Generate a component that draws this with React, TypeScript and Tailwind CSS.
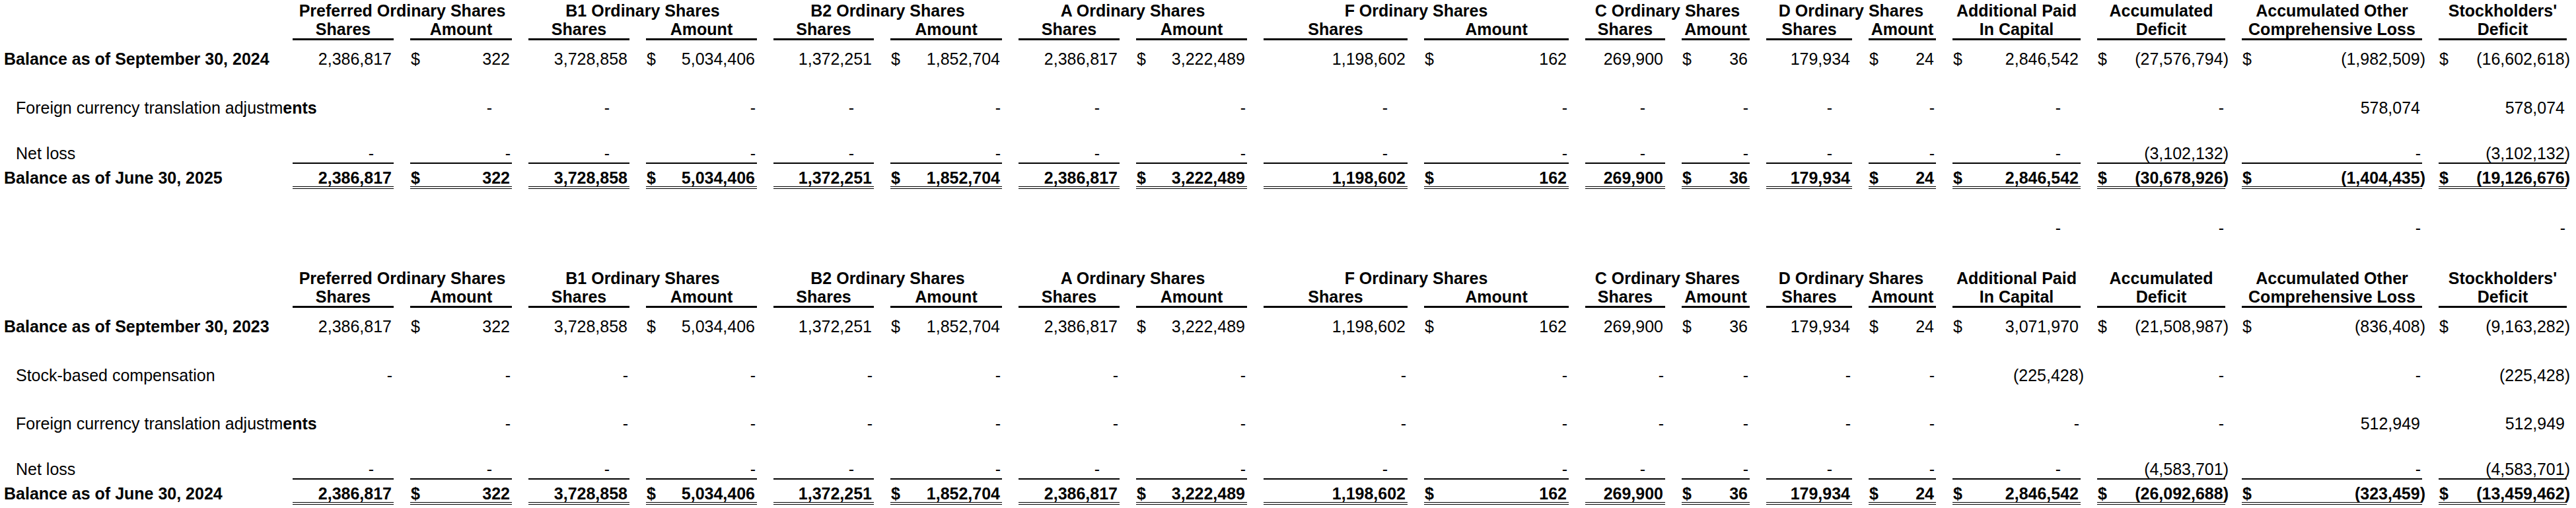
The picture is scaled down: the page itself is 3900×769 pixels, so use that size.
import clsx from 'clsx';

// same column template for every row of both tables
const grid =
  'grid grid-cols-[418px_153px_154px_153px_168px_152px_169px_153px_168px_218px_219px_121px_103px_130px_102px_194px_194px_273px_194px] gap-x-[25px]';

const shareVals = [
  '2,386,817', '$322', '3,728,858', '$5,034,406', '1,372,251', '$1,852,704', '2,386,817', '$3,222,489',
  '1,198,602', '$162', '269,900', '$36', '179,934', '$24',
];

const groups = ['Preferred Ordinary Shares', 'B1 Ordinary Shares', 'B2 Ordinary Shares', 'A Ordinary Shares', 'F Ordinary Shares', 'C Ordinary Shares', 'D Ordinary Shares'];
const singles: [string, string][] = [
  ['Additional Paid', 'In Capital'],
  ['Accumulated', 'Deficit'],
  ['Accumulated Other', 'Comprehensive Loss'],
  ["Stockholders'", 'Deficit'],
];

type Row = { label: React.ReactNode; cells: string[]; kind?: 'under' | 'total'; gap: string };

const Value = ({ v, line }: { v: string; line?: string }) => {
  const dollar = v.startsWith('$');
  const body = dollar ? v.slice(1) : v;
  return (
    <div className={clsx('flex justify-between whitespace-nowrap', line)}>
      <span className="pl-[1px]">{dollar ? '$' : ''}</span>
      {body === '-n' ? (
        <span className="pr-[2px]">-</span>
      ) : body === '-f' ? (
        <span className="pr-[30px]">-</span>
      ) : (
        <span className={body.startsWith('(') ? 'pr-[3px] mr-[-8px]' : 'pr-[3px]'}>{body}</span>
      )}
    </div>
  );
};

const Cell = ({ v, kind }: { v: string; kind?: Row['kind'] }) => {
  if (kind === 'under') return <Value v={v} line="border-b-2 border-black" />;
  if (kind === 'total')
    return (
      <div>
        <Value v={v} line="border-b border-black" />
        <div className="mt-[2px] h-px bg-black" />
      </div>
    );
  return <Value v={v} />;
};

const Header = ({ gap }: { gap: string }) => (
  <div className={gap}>
    <div className={clsx(grid, 'leading-[28px] font-bold text-center whitespace-nowrap')}>
      <div />
      {groups.map((g) => (
        <div key={g} className="col-span-2">{g}</div>
      ))}
      {singles.map(([a]) => (
        <div key={a}>{a}</div>
      ))}
    </div>
    <div className={clsx(grid, 'leading-[28px] font-bold text-center whitespace-nowrap')}>
      <div />
      {groups.map((g) => [
        <div key={g + 's'} className="border-b-[3px] border-black">Shares</div>,
        <div key={g + 'a'} className="border-b-[3px] border-black">Amount</div>,
      ])}
      {singles.map(([a, b]) => (
        <div key={a + b} className="border-b-[3px] border-black">{b}</div>
      ))}
    </div>
  </div>
);

const Line = ({ row }: { row: Row }) => (
  <div className={clsx(grid, row.gap, row.kind === 'total' ? 'leading-[26px] font-bold' : 'leading-[28px]')}>
    {row.label}
    {row.cells.map((c, i) => (
      <Cell key={i} v={c} kind={row.kind} />
    ))}
  </div>
);

// e = empty, n = dash at the right edge, f = dash held back from the edge
const dashes = (pattern: string) => pattern.split(' ').map((p) => (p === 'e' ? '' : p === 'n' ? '-n' : p === 'f' ? '-f' : p));

const Bold = ({ children }: { children: React.ReactNode }) => (
  <div className="pl-[6px] font-bold whitespace-nowrap">{children}</div>
);
const Plain = ({ children }: { children: React.ReactNode }) => (
  <div className="pl-[24px] whitespace-nowrap">{children}</div>
);
const foreign = (
  <Plain>
    Foreign currency translation adjustm<span className="font-bold">ents</span>
  </Plain>
);

const table1: Row[] = [
  { label: <Bold>Balance as of September 30, 2024</Bold>, gap: 'mt-[14px]', cells: [...shareVals, '$2,846,542', '$(27,576,794)', '$(1,982,509)', '$(16,602,618)'] },
  { label: foreign, gap: 'mt-[46px]', cells: dashes('e f f n f n f n f n f n f n f n 578,074 578,074') },
  { label: <Plain>Net loss</Plain>, gap: 'mt-[41px]', kind: 'under', cells: dashes('f n f n f n f n f n f n f n f (3,102,132) n (3,102,132)') },
  { label: <Bold>Balance as of June 30, 2025</Bold>, gap: 'mt-[8px]', kind: 'total', cells: [...shareVals, '$2,846,542', '$(30,678,926)', '$(1,404,435)', '$(19,126,676)'] },
  { label: <div />, gap: 'mt-[45px]', cells: dashes('e e e e e e e e e e e e e e f n n n') },
];

const table2: Row[] = [
  { label: <Bold>Balance as of September 30, 2023</Bold>, gap: 'mt-[14px]', cells: [...shareVals, '$3,071,970', '$(21,508,987)', '$(836,408)', '$(9,163,282)'] },
  { label: <Plain>Stock-based compensation</Plain>, gap: 'mt-[46px]', cells: dashes('n n n n n n n n n n n n n n (225,428) n n (225,428)') },
  { label: foreign, gap: 'mt-[45px]', cells: dashes('e n n n n n n n n n n n n n n n 512,949 512,949') },
  { label: <Plain>Net loss</Plain>, gap: 'mt-[41px]', kind: 'under', cells: dashes('f f f n f n f n f n f n f n f (4,583,701) n (4,583,701)') },
  { label: <Bold>Balance as of June 30, 2024</Bold>, gap: 'mt-[8px]', kind: 'total', cells: [...shareVals, '$2,846,542', '$(26,092,688)', '$(323,459)', '$(13,459,462)'] },
];

export default function App() {
  return (
    <div className="w-[3900px] h-[769px] overflow-hidden bg-white text-black pt-[2px] text-[25px] font-['Liberation_Sans',Arial,sans-serif]">
      <Header gap="" />
      {table1.map((r, i) => (
        <Line key={i} row={r} />
      ))}
      <Header gap="mt-[48px]" />
      {table2.map((r, i) => (
        <Line key={i} row={r} />
      ))}
    </div>
  );
}
